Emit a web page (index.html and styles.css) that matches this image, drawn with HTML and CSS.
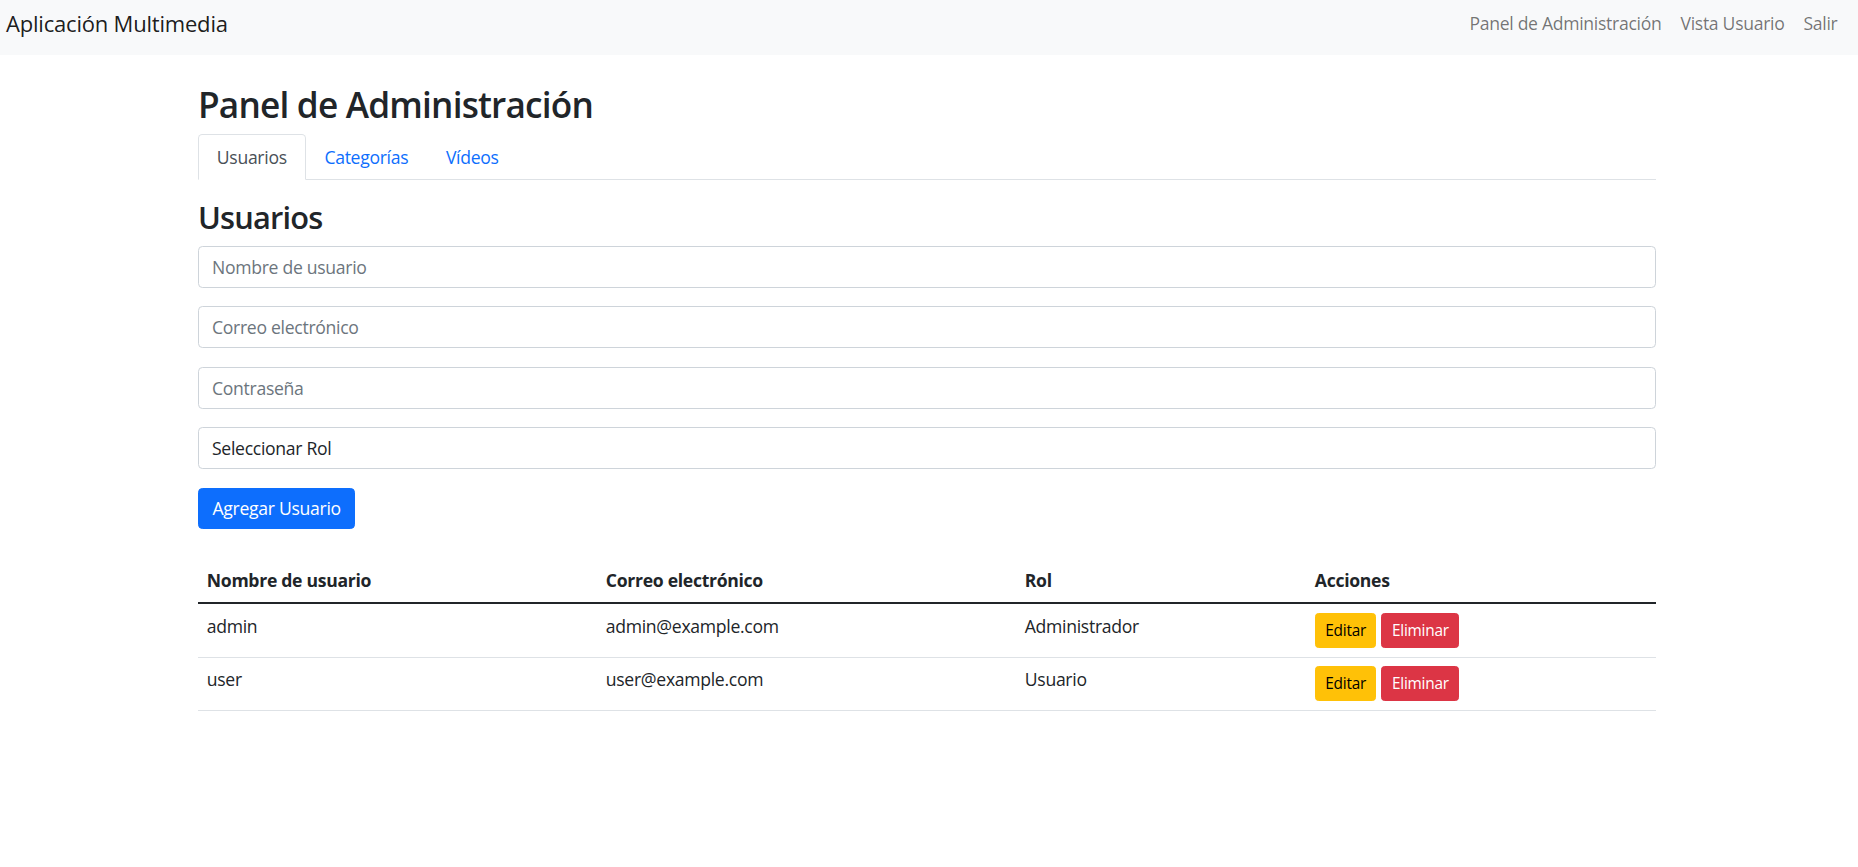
FILE: index.html
```html
<!DOCTYPE html>
<html lang="es">
<head>
<meta charset="utf-8">
<title>Aplicación Multimedia</title>
<link rel="stylesheet" href="styles.css">
</head>
<body>
<nav class="navbar">
  <a class="brand" href="#">Aplicación Multimedia</a>
  <ul class="nav-links">
    <li><a class="nav-link" href="#">Panel de Administración</a></li>
    <li><a class="nav-link" href="#">Vista Usuario</a></li>
    <li><a class="nav-link" href="#">Salir</a></li>
  </ul>
</nav>
<main class="container">
  <h1 class="page-title">Panel de Administración</h1>
  <ul class="tabs">
    <li><a class="tab active" href="#">Usuarios</a></li>
    <li><a class="tab" href="#">Categorías</a></li>
    <li><a class="tab" href="#">Vídeos</a></li>
  </ul>
  <section class="panel">
    <h2 class="section-title">Usuarios</h2>
    <form class="user-form">
      <input class="field" type="text" placeholder="Nombre de usuario">
      <input class="field" type="email" placeholder="Correo electrónico">
      <input class="field" type="password" placeholder="Contraseña">
      <select class="field select">
        <option>Seleccionar Rol</option>
        <option>Administrador</option>
        <option>Usuario</option>
      </select>
      <button class="btn btn-primary" type="button">Agregar Usuario</button>
    </form>
    <table class="table">
      <thead>
        <tr>
          <th class="col-name">Nombre de usuario</th>
          <th class="col-email">Correo electrónico</th>
          <th class="col-role">Rol</th>
          <th class="col-actions">Acciones</th>
        </tr>
      </thead>
      <tbody>
        <tr>
          <td>admin</td>
          <td>admin@example.com</td>
          <td>Administrador</td>
          <td><div class="actions"><button class="btn btn-sm btn-warning" type="button">Editar</button><button class="btn btn-sm btn-danger" type="button">Eliminar</button></div></td>
        </tr>
        <tr>
          <td>user</td>
          <td>user@example.com</td>
          <td>Usuario</td>
          <td><div class="actions"><button class="btn btn-sm btn-warning" type="button">Editar</button><button class="btn btn-sm btn-danger" type="button">Eliminar</button></div></td>
        </tr>
      </tbody>
    </table>
  </section>
</main>
</body>
</html>
```

FILE: styles.css
```css
* {
  box-sizing: border-box;
}

html, body {
  margin: 0;
  padding: 0;
  background: #fff;
}

body {
  font-family: "Open Sans", "Noto Sans", sans-serif;
  font-size: 17.6px;
  line-height: 1.5;
  letter-spacing: -0.3px;
  color: #212529;
}

a {
  text-decoration: none;
}

/* Navbar */
.navbar {
  height: 55px;
  background: #f8f9fa;
  display: flex;
  align-items: center;
  justify-content: space-between;
  padding: 0 11px 8px 6px;
}

.brand {
  font-size: 22px;
  line-height: 33px;
  letter-spacing: -0.2px;
  color: rgba(0, 0, 0, 0.9);
}

.nav-links {
  list-style: none;
  margin: 0;
  padding: 0;
  display: flex;
}

.nav-link {
  display: block;
  padding: 0 9.5px;
  line-height: 26.4px;
  color: rgba(0, 0, 0, 0.55);
}

/* Container */
.container {
  width: 1458px;
  margin-left: 198px;
  padding-top: 27.5px;
}

.page-title {
  margin: 0 0 9px;
  font-size: 35.2px;
  font-weight: 600;
  letter-spacing: -0.8px;
  line-height: 1.2;
}

/* Tabs */
.tabs {
  list-style: none;
  margin: 0;
  padding: 0;
  display: flex;
  border-bottom: 1px solid #dee2e6;
}

.tab {
  display: block;
  margin-bottom: -1px;
  padding: 8.8px 17.8px;
  line-height: 26.4px;
  border: 1px solid transparent;
  border-top-left-radius: 4.4px;
  border-top-right-radius: 4.4px;
  color: #0d6efd;
}

.tab.active {
  color: #495057;
  background: #fff;
  border-color: #dee2e6 #dee2e6 #fff;
}

/* Section */
.section-title {
  margin: 19.6px 0 10px;
  font-size: 30.8px;
  font-weight: 600;
  letter-spacing: -0.8px;
  line-height: 1.2;
}

.user-form {
  display: flex;
  flex-direction: column;
  align-items: flex-start;
}

.field {
  display: block;
  width: 100%;
  height: 42px;
  margin: 0 0 18.2px;
  padding: 0 13px;
  font-family: inherit;
  font-size: 17.6px;
  line-height: 26.4px;
  letter-spacing: -0.3px;
  color: #212529;
  background: #fff;
  border: 1px solid #ced4da;
  border-radius: 4.4px;
  outline: none;
}

.field::placeholder {
  color: #6c757d;
  opacity: 1;
}

.select {
  appearance: none;
  -webkit-appearance: none;
}

.btn {
  display: inline-block;
  font-family: inherit;
  font-size: 17.6px;
  line-height: 26.4px;
  letter-spacing: -0.3px;
  border: 1px solid transparent;
  border-radius: 4.4px;
  cursor: pointer;
}

.btn-primary {
  height: 41px;
  margin-top: 1px;
  padding: 0 13.5px;
  color: #fff;
  background: #0d6efd;
  border-color: #0d6efd;
}

.btn-sm {
  height: 35px;
  padding: 0 9.5px;
  font-size: 15.4px;
  line-height: 23px;
  letter-spacing: -0.25px;
  border-radius: 3.5px;
}

.btn-warning {
  color: #000;
  background: #ffc107;
  border-color: #ffc107;
}

.btn-danger {
  margin-left: 5px;
  color: #fff;
  background: #dc3545;
  border-color: #dc3545;
}

/* Table */
.table {
  width: 100%;
  margin-top: 29px;
  border-collapse: collapse;
  table-layout: fixed;
}

.col-name { width: 399px; }
.col-email { width: 419px; }
.col-role { width: 290px; }
.col-actions { width: 350px; }

.table th,
.table td {
  padding: 8.8px 8.8px;
  text-align: left;
  vertical-align: top;
  line-height: 26.4px;
}

.table th {
  font-weight: 700;
  border-bottom: 2px solid #212529;
}

.table td {
  border-bottom: 1px solid #dee2e6;
}

.actions {
  display: flex;
  align-items: flex-start;
}
```
